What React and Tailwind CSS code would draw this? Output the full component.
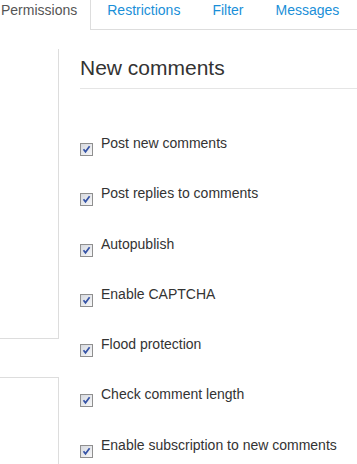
import React from "react";

function Check() {
  return (
    <span className="relative inline-block w-[13px] h-[13px] shrink-0 border border-[#8f8f8f] bg-gradient-to-br from-[#d6d9df] to-[#f7f7f8] mt-[19px]">
      <svg viewBox="0 0 11 11" className="absolute inset-0 w-[11px] h-[11px]">
        <path d="M2.5 5.2 L4.5 7.8 L8.6 2.3" fill="none" stroke="#3452a6" strokeWidth="1.7" />
      </svg>
    </span>
  );
}

const items = [
  "Post new comments",
  "Post replies to comments",
  "Autopublish",
  "Enable CAPTCHA",
  "Flood protection",
  "Check comment length",
  "Enable subscription to new comments",
];

export default function App() {
  return (
    <div className="w-[357px] h-[464px] overflow-hidden bg-white text-[14px] leading-[20px] text-[#333]" style={{ fontFamily: '"Liberation Sans", Arial, sans-serif' }}>
      <div className="flex border-b border-[#ddd] h-[30px]">
        <div className="pl-px pr-[13px] border-r border-[#ddd] bg-white h-[30px] -mb-px text-[#555]">Permissions</div>
        <div className="px-4 text-[#1a8fd8]">Restrictions</div>
        <div className="px-4 text-[#1a8fd8]">Filter</div>
        <div className="px-4 text-[#1a8fd8]">Messages</div>
      </div>
      <div className="flex mt-[19px]">
        <div className="w-[59px] shrink-0 flex flex-col">
          <div className="h-[290px] border-r border-b border-[#ddd]"></div>
          <div className="mt-[38px] h-[200px] border-r border-t border-[#ddd]"></div>
        </div>
        <div className="ml-[21px] flex-1 min-w-0">
          <div className="pt-[5px] pb-[6px] border-b border-[#e5e5e5] text-[21px] leading-[28px] text-[#333]">New comments</div>
          <div className="pt-[35px] flex flex-col">
            {items.map((t) => (
              <div key={t} className="flex items-start h-[50.3px]">
                <Check />
                <span className="ml-[8px] whitespace-nowrap pt-[9px]">{t}</span>
              </div>
            ))}
          </div>
        </div>
      </div>
    </div>
  );
}
